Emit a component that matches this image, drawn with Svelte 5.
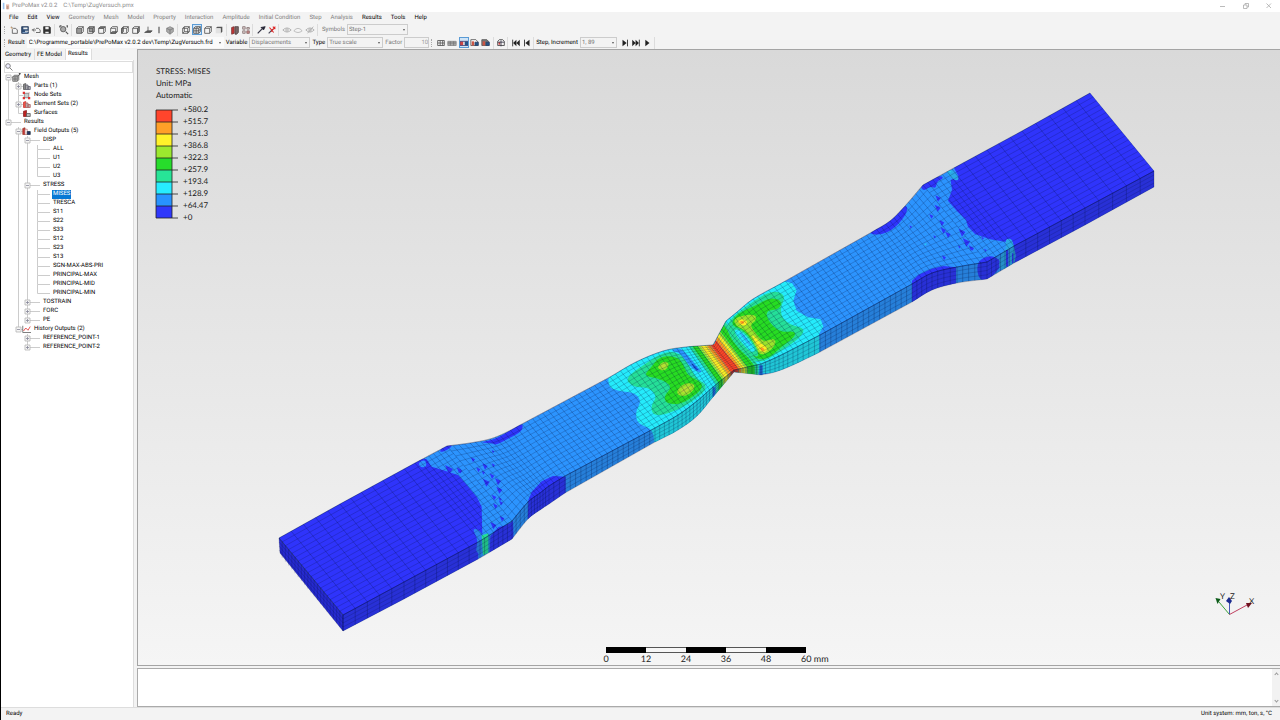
<script>
  const menus = [
    ['File', 1], ['Edit', 1], ['View', 1], ['Geometry', 0], ['Mesh', 0], ['Model', 0], ['Property', 0],
    ['Interaction', 0], ['Amplitude', 0], ['Initial Condition', 0], ['Step', 0], ['Analysis', 0],
    ['Results', 1], ['Tools', 1], ['Help', 1]
  ];

  // Toolbar groups: total width in pixels and the icons spread over it.
  const mainTools = [
    { w: 47, icons: ['new', 'open', 'import', 'save'] },
    { w: 15, icons: ['zoomfit'] },
    { w: 104, icons: ['front', 'back', 'top', 'bottom', 'left', 'right', 'normal', 'vertical', 'iso'] },
    { w: 47, icons: ['wire', 'edges*', 'outline', 'shaded'] },
    { w: 24, icons: ['section', 'explode'] },
    { w: 24, icons: ['query', 'unquery'] },
    { w: 37, icons: ['eye', 'eye2', 'eyeoff'] }
  ];
  const resultTools = [
    { w: 59, icons: ['grid', 'undeformed', 'contour*', 'deform', 'deform2'] },
    { w: 12, icons: ['animate'] }
  ];

  const tree = [
    [0, 'Mesh', 'mesh', '-'],
    [1, 'Parts (1)', 'part', '+'],
    [1, 'Node Sets', 'nodes', ''],
    [1, 'Element Sets (2)', 'elements', '+'],
    [1, 'Surfaces', 'surface', ''],
    [0, 'Results', '', '-'],
    [1, 'Field Outputs (5)', 'field', '-'],
    [2, 'DISP', '', '-'],
    [3, 'ALL', '', ''], [3, 'U1', '', ''], [3, 'U2', '', ''], [3, 'U3', '', ''],
    [2, 'STRESS', '', '-'],
    [3, 'MISES', '', ''], [3, 'TRESCA', '', ''], [3, 'S11', '', ''], [3, 'S22', '', ''], [3, 'S33', '', ''],
    [3, 'S12', '', ''], [3, 'S23', '', ''], [3, 'S13', '', ''], [3, 'SGN-MAX-ABS-PRI', '', ''],
    [3, 'PRINCIPAL-MAX', '', ''], [3, 'PRINCIPAL-MID', '', ''], [3, 'PRINCIPAL-MIN', '', ''],
    [2, 'TOSTRAIN', '', '+'], [2, 'FORC', '', '+'], [2, 'PE', '', '+'],
    [1, 'History Outputs (2)', 'history', '-'],
    [2, 'REFERENCE_POINT-1', '', '+'], [2, 'REFERENCE_POINT-2', '', '+']
  ];
  const railX = [3.5, 13.5, 22.5, 32.5];
  const labelX = [18, 28, 37, 47];
  const continues = (i, l) => {
    for (let k = i + 1; k < tree.length; k++) {
      if (tree[k][0] === l) return true;
      if (tree[k][0] < l) return false;
    }
    return false;
  };
  const rows = tree.map(([level, label, icon, exp], i) => {
    let d = '';
    for (let l = 0; l <= level; l++) {
      const below = continues(i, l);
      if (l === level) {
        if (i > 0) d += `M${railX[l]} 0V4.5`;
        if (below) d += `M${railX[l]} 4.5V9`;
      } else if (below) d += `M${railX[l]} 0V9`;
    }
    d += `M${railX[level]} 4.5H${icon ? labelX[level] - 10 : labelX[level] - 2}`;
    return { level, label, icon, exp, d, w: labelX[level], x: railX[level] };
  });

  const legend = [
    ['+580.2', '#ff452c'], ['+515.7', '#ff9f28'], ['+451.3', '#fff22a'], ['+386.8', '#9ce82e'],
    ['+322.3', '#27dc2b'], ['+257.9', '#27e497'], ['+193.4', '#27ecff'], ['+128.9', '#2893ff'],
    ['+64.47', '#2f38fb'], ['+0', '']
  ];
  const C = { b0: '#2f34fb', b1: '#2c94fe', cy: '#25ebfb', te: '#25df98', gr: '#27dc22', li: '#9be32c', ye: '#fdef25', or: '#ff9a22', re: '#fd4526' };

  // Matching stations along the specimen: upper edge, lower edge, side thickness, cells to the next station.
  const st = [
    [279, 538, 343, 615, 16, 5], [340, 504, 404, 582, 17, 7], [415, 463, 480, 541, 17, 7],
    [447, 446, 512, 521, 18, 4], [470, 443, 528, 502, 17, 4], [490, 439, 540, 493, 17, 3], [505, 433, 549, 486, 18, 3],
    [522, 424, 565, 476, 17, 17], [610, 377, 655, 428, 14, 5], [636, 362, 678, 415, 15, 5], [663, 351, 697, 401, 15, 5],
    [686, 347, 713, 387, 10, 7], [713, 345, 734, 370, 2, 6], [726, 321, 761, 364, 11, 3], [737, 312, 775, 358, 14, 4],
    [753, 299, 793, 349, 16, 5], [780, 284, 820, 335, 17, 17], [872, 232, 912, 284, 18, 4], [890, 221, 932, 273, 17, 4],
    [905, 206, 957, 267, 16, 5], [923, 185, 987, 262, 17, 6], [952, 169, 1014, 246, 17, 6],
    [1022, 131, 1085, 208, 17, 5], [1090, 93, 1154, 171, 16, 0]
  ];
  const pts = (a) => a.map((p) => p.join(' ')).join('L');
  // Stretches of the outline that are curved; the rest is straight.
  const curved = [[3, 7], [8, 12], [13, 16], [17, 20]];
  const at = (i, f) => {
    const r = curved.find(([a, b]) => i >= a && i < b);
    return [0, 1, 2, 3, 4].map((j) => {
      const p1 = st[i][j], p2 = st[i + 1][j];
      if (!r) return +(p1 + (p2 - p1) * f).toFixed(2);
      const p0 = i > r[0] ? st[i - 1][j] : 2 * p1 - p2;
      const p3 = i + 1 < r[1] ? st[i + 2][j] : 2 * p2 - p1;
      const v = 0.5 * (2 * p1 + (p2 - p0) * f + (2 * p0 - 5 * p1 + 4 * p2 - p3) * f * f + (3 * p1 - p0 - 3 * p2 + p3) * f * f * f);
      return +v.toFixed(2);
    });
  };
  const range = (a, b) => {
    const out = [];
    for (let i = a; i < b; i++) for (let k = 0; k < 4; k++) out.push(at(i, k / 4));
    out.push(st[b]);
    return out;
  };
  const fine = range(0, 23);
  const up = fine.map((s) => [s[0], s[1]]);
  const lo = fine.map((s) => [s[2], s[3]]);
  const bt = fine.map((s) => [s[2], s[3] + s[4]]);
  const topFace = `M${pts(up)}L${pts([...lo].reverse())}Z`;
  const sideFace = `M${pts(lo)}L${pts([...bt].reverse())}Z`;
  const endFace = 'M279 538L343 615V631L280 553Z';
  let mesh = '';
  for (const [a, b, n] of [[0, 3, 20], [3, 20, 15], [20, 23, 20]]) {
    const part = range(a, b);
    for (let k = 0; k <= n; k++) {
      const t = k / n;
      mesh += 'M' + pts(part.map((s) => [(s[0] + (s[2] - s[0]) * t).toFixed(1), (s[1] + (s[3] - s[1]) * t).toFixed(1)]));
    }
  }
  let cross = '';
  st.slice(0, -1).forEach((s, i) => {
    for (let k = 0; k < s[5]; k++) {
      const v = at(i, k / s[5]);
      cross += `M${v[0]} ${v[1]}L${v[2]} ${v[3]}v${v[4]}`;
    }
  });
  let sideMesh = '';
  for (const t of [0.25, 0.5, 0.75]) {
    sideMesh += 'M' + pts(fine.map((s) => [s[2], (s[3] + s[4] * t).toFixed(1)]));
    sideMesh += `M279 ${538 + 16 * t}L343 ${615 + 16 * t}`;
  }
  for (let k = 1; k < 20; k++) sideMesh += `M${279 + 3.2 * k} ${538 + 3.85 * k}v16`;

  // Closed smooth curve through the midpoints of a control polygon given as "x,y x,y ...".
  const blob = (text) => {
    const p = text.split(' ').map((q) => q.split(',').map(Number));
    const mid = (a, b) => [(a[0] + b[0]) / 2, (a[1] + b[1]) / 2];
    let d = 'M' + mid(p[p.length - 1], p[0]).join(' ');
    p.forEach((q, i) => (d += `Q${q.join(' ')} ${mid(q, p[(i + 1) % p.length]).join(' ')}`));
    return d + 'Z';
  };
  const poly = (text) => 'M' + text.replaceAll(' ', 'L').replaceAll(',', ' ') + 'Z';

  // Bands swept between two transverse lines of the neck.
  const sweep = (a, b, stops) => {
    const line = (f) => [0, 1, 2, 3].map((j) => a[j] + (b[j] - a[j]) * f);
    return stops.slice(0, -1).map(([f, c], i) => {
      const p = line(f), q = line(stops[i + 1][0]);
      return { c, d: `M${p[0]} ${p[1]}L${p[2]} ${p[3]}V${p[3] + 40}H${q[2]}V${q[3]}L${q[0]} ${q[1]}Z` };
    });
  };
  const neck = [
    ...sweep([306, 230, 396, 356], [403, 222, 463, 300], [[0, C.cy], [0.2, C.te], [0.3, C.gr], [0.48, C.li], [0.55, C.ye], [0.74, C.or], [0.86, C.re], [1, '']]),
    ...sweep([403, 222, 463, 300], [436, 148, 540, 285], [[0, C.re], [0.16, C.or], [0.28, C.ye], [0.42, C.li], [0.52, C.gr], [0.8, C.te], [0.93, '']])
  ].filter((b) => b.c);
  const neckBlobs = [
    [C.cy, '86,305 84,352 118,364 166,368 184,395 166,425 172,462 222,478 222,540 480,400 480,300 400,200 300,215 180,260'],
    [C.te, '134,325 160,352 205,352 232,378 212,408 220,438 270,430 335,398 388,350 348,325 318,270 290,246 250,246 190,285'],
    [C.gr, '190,318 212,294 238,260 286,258 312,282 320,315 362,335 368,352 348,374 300,404 258,400 252,378 278,350 240,325'],
    [C.li, '228,294 252,272 270,282 254,304'],
    [C.li, '286,370 306,342 342,338 344,360 312,382'],
    ['#b9dd35', '240,290 252,280 260,286 250,296'],
    ['#b9dd35', '300,364 314,350 334,346 332,358 312,370']
  ];
  const neckStrip = [
    [C.b1, '268,240 300,232 326,258 350,288 368,308 350,306 324,284 304,250'],
    ['#174fd4', '332,278 344,286 358,302 346,300']
  ];
  const rightBlobs = [
    [C.te, '446,150 500,108 560,68 596,64 616,80 602,110 604,140 630,165 672,174 668,194 640,218 580,258 545,278 500,265 440,190'],
    [C.gr, '452,158 476,128 530,106 570,82 606,92 598,118 556,122 566,156 602,188 644,182 646,200 600,234 566,266 528,268 505,240 520,225 500,190 470,175'],
    [C.li, '460,150 480,138 526,132 530,152 508,164 532,198 552,216 584,204 588,222 566,248 540,256 526,230 512,200 490,176 470,170'],
    [C.ye, '470,152 490,146 504,156 496,168 480,164'],
    [C.ye, '512,190 530,206 548,226 562,230 560,246 542,246 530,226'],
    [C.or, '478,154 490,152 494,160 484,162'], [C.or, '540,232 552,234 554,242 544,242'],
    [C.te, '448,172 474,170 505,196 532,236 536,262 516,256 484,228'],
    [C.cy, '458,178 482,180 512,212 528,242 514,248 484,218'],
    ['#2fb6f5', '474,184 486,190 508,216 514,230 500,220']
  ];
  const rightGrip = [
    [C.b0, poly('341,262 356,290 332,300 336,330 324,362 350,392 378,420 384,440 405,462 450,478 500,486 522,494 524,560 970,340 970,260 750,20')],
    [C.b0, blob('240,315 262,298 305,286 310,296 290,304 288,326 270,318 250,334')],
    [C.b0, blob('80,460 150,420 198,370 204,396 165,446 120,466')],
    [C.b0, poly('216,680 216,602 236,584 275,566 310,558 348,562 348,620')],
    [C.b0, blob('412,542 450,526 476,536 486,555 464,580 440,612 412,590')],
    ['#2ba8e8', blob('318,278 338,268 346,282 358,294 350,304 330,290')],
    ['#2ba8e8', blob('480,528 500,505 495,478 515,475 522,500 530,540 506,565 476,570')],
    [C.b0, 'M498 510v50h7v-50zM516 520v30h4v-30z'],
    ['#25d0ee', 'M318 276l14-5 2 6zM252 492l8-2-3 6z']
  ];
  const leftGrip = [
    [C.b0, poly('20,380 20,460 235,690 640,460 640,395 652,374 650,290 636,262 600,218 580,196 540,182 500,170 485,148 460,145 235,270')],
    [C.b0, blob('520,128 540,100 566,104 545,122')],
    [C.b0, blob('640,98 700,86 772,34 774,62 730,86 692,106 680,98')],
    [C.b0, poly('788,340 790,270 800,246 830,214 864,198 902,200 902,260')],
    [C.b0, poly('674,430 676,378 700,352 744,330 746,400')],
    [C.b1, blob('458,160 480,148 486,168 470,174')],
    ['#2b86f0', blob('622,358 636,356 652,372 664,398 662,430 630,430 640,390')],
    [C.b1, blob('690,345 740,318 750,330 712,352')],
    [C.te, 'M650 376l20-6v58l-16 8z'],
    ['#20b98f', 'M656 390v44M664 386v46']
  ];
  const tri = (list) => list.split(' ').map((q) => { const [x, y, s = 8] = q.split(',').map(Number); return `M${x} ${y}l${s} ${s / 2}l${-s / 2} ${s * 0.7}z`; }).join('');
  const rightSpecks = tri('286,346,16 284,374,18 268,402,12 298,420,15 302,442,16 316,455,16 356,446,20 368,474,22 386,496,14 208,436,8 306,526,12 354,496,8 424,470,8 392,500,10 432,506,8 280,466,8');
  const leftSpecks = tri('540,165,24 575,172,14 618,142,12 634,172,12 652,160,16 674,190,14 654,206,20 690,204,18 694,230,18 680,254,14 684,280,14 702,272,12 676,336,18 704,318,14 580,176,12 680,120,8 700,262,10 650,182,10 680,160,10');

  let results = $state('MISES');
</script>

{#snippet glyph(name)}
  <svg class="glyph" viewBox="0 0 12 12" aria-hidden="true" fill="none" stroke="#555" stroke-width="1">
    {#if name === 'new'}<path d="M3 2l1 2M5 4h3l2 2v4H4V5" /><path d="M2 3l2 1" stroke="#d89040" />
    {:else if name === 'open'}<path d="M2 2h8v8H2z" fill="#2d4d76" stroke="#263b59" /><path d="M4 3h5v2H4zM6 7h4v1H6z" fill="#eee" stroke="none" /><path d="M3 9h6" stroke="#8ac" />
    {:else if name === 'import'}<path d="M1 6h5M4 4L2 6l2 2M6 4h3l2 2v3H6" />
    {:else if name === 'save'}<path d="M2 2h7l1 1v7H2z" fill="#333" stroke="#333" /><path d="M4 2h4v3H4zM4 8h4v2H4z" fill="#eee" stroke="none" />
    {:else if name === 'zoomfit'}<circle cx="5" cy="5" r="3.200" fill="#aaa" /><path d="M8 8l3 3M1 1h2M1 1v2M9 1h1v2" stroke-width="1.400" />
    {:else if name === 'front'}<path d="M2 4h6v6H2z" fill="#999" /><path d="M2 4l2-2h6v6L8 10M8 4l2-2" />
    {:else if name === 'back'}<path d="M4 2h6v6H4z" fill="#999" /><path d="M2 4h6v6H2zM2 4l2-2M8 4l2-2M8 10l2-2" />
    {:else if name === 'top'}<path d="M2 4l2-2h6L8 4z" fill="#777" /><path d="M2 4h6v6H2zM8 10l2-2V2" />
    {:else if name === 'bottom'}<path d="M2 10l2-2h6l-2 2z" fill="#777" /><path d="M2 4h6v6H2zM2 4l2-2h6v6" />
    {:else if name === 'left'}<path d="M2 4l2-2v6l-2 2z" fill="#888" /><path d="M2 4h6v6H2zM4 2h6v6L8 10M8 4l2-2" />
    {:else if name === 'right'}<path d="M8 4l2-2v6l-2 2z" fill="#888" /><path d="M2 4h6v6H2zM2 4l2-2h6" />
    {:else if name === 'normal'}<path d="M2 9l3-2h6L9 9z" fill="#555" /><path d="M6 7V2" />
    {:else if name === 'vertical'}<path d="M6 2v8" stroke-width="1.400" />
    {:else if name === 'iso'}<path d="M2 4l4-2 4 2v4l-4 3-4-3z" fill="#aaa" stroke="#888" /><path d="M2 4l4 2v5M6 6l4-2" stroke="#777" />
    {:else if name === 'wire'}<path d="M2 4h6v6H2zM4 2h6v6H4zM2 4l2-2M8 4l2-2M2 10l2-2M8 10l2-2" />
    {:else if name === 'edges'}<path d="M2 4l2-2h6v6l-2 2H2z" fill="#ddd" /><path d="M2 4h6l2-2M8 4v6M2 7h6l2-2M5 4v6M5 4l2-2" />
    {:else if name === 'outline'}<path d="M2 4h6v6H2zM2 4l2-2h6v6l-2 2M8 4l2-2" />
    {:else if name === 'shaded'}<path d="M2 4l2-2h6v6L8 10V4z" fill="#555" stroke="none" /><path d="M2 4h6v6H2z" fill="#e2e2e2" stroke="none" />
    {:else if name === 'section'}<path d="M2 3l3-1v8l-3 1z" fill="#c33" stroke="#733" /><path d="M6 2h4v7l-2 2H6z" fill="#766" stroke="#544" />
    {:else if name === 'explode'}<path d="M2 2h3v3H2zM7 3h3v2H7zM2 7h3v3H2z" fill="#dcc" stroke="#877" /><path d="M7 7h3v3H7z" fill="#c88" stroke="#866" />
    {:else if name === 'query'}<path d="M2 10l5-5" stroke="#334" stroke-width="1.500" /><path d="M6 3l3 3 2-4z" fill="#223" stroke="#223" />
    {:else if name === 'unquery'}<path d="M2 10l5-5" stroke="#445" stroke-width="1.400" /><path d="M7 2l3 3M10 2L5 8M3 3l5 6" stroke="#d22" stroke-width="1.300" />
    {:else if name === 'eye'}<path d="M1 6q5-5 10 0q-5 5-10 0z" stroke="#aaa" /><circle cx="6" cy="6" r="1.500" stroke="#aaa" />
    {:else if name === 'eye2'}<path d="M1 7q5-6 10 0q-5 4-10 0z" stroke="#b5b5b5" />
    {:else if name === 'eyeoff'}<path d="M1 6q5-5 10 0q-5 5-10 0zM3 10l7-8" stroke="#aaa" /><circle cx="6" cy="6" r="1.500" stroke="#aaa" />
    {:else if name === 'grid'}<path d="M2 3h8v6H2zM2 6h8M5 3v6M8 3v6" stroke="#555" />
    {:else if name === 'undeformed'}<path d="M1 4h10v5H1z" fill="#aaa" stroke="#888" /><path d="M4 4v5M8 4v5M1 6h10" stroke="#777" />
    {:else if name === 'contour'}<path d="M1 4h4v5H1z" fill="#c44" stroke="none" /><path d="M5 4h2v5H5z" fill="#dcc" stroke="none" /><path d="M7 4h4v5H7z" fill="#258" stroke="none" /><path d="M1 4h10v5H1z" stroke="#447" />
    {:else if name === 'deform' || name === 'deform2'}<path d="M1 2h6l2 2v5H1z" fill={name === 'deform' ? '#fff' : '#777'} /><path d="M2 4h3v5H2z" fill="#c54" stroke="none" /><path d="M6 5h4v4H6z" fill="#258" stroke="#346" />
    {:else if name === 'animate'}<path d="M2 4l2-2h4l2 2v5H2z" stroke="#444" /><path d="M3 5h2v3H3z" fill="#c44" stroke="none" /><path d="M6 3v7M2 5h8" stroke="#334" />
    {:else if name === 'first'}<path d="M2 2v8" stroke="#222" /><path d="M6.500 2v8L2.500 6zM10.500 2v8L6.500 6z" fill="#222" stroke="none" />
    {:else if name === 'prev'}<path d="M3 2v8" stroke="#222" /><path d="M9 2v8L4 6z" fill="#222" stroke="none" />
    {:else if name === 'next'}<path d="M9 2v8" stroke="#222" /><path d="M3 2v8l5-4z" fill="#222" stroke="none" />
    {:else if name === 'last'}<path d="M10 2v8" stroke="#222" /><path d="M5.500 2v8l4-4zM1.500 2v8l4-4z" fill="#222" stroke="none" />
    {:else if name === 'play'}<path d="M4 2v8l5-4z" fill="#222" stroke="none" />
    {:else if name === 'mesh'}<path d="M1 5h6v6H1zM1 8h6M4 5v6M1 5l2-2h6v6l-2 2M7 5l2-2" fill="#ccc" stroke="#555" /><path d="M9 1h3M10 0v3" stroke="#333" />
    {:else if name === 'part' || name === 'elements'}<path d="M2 3l3-1v8H2z" fill={name === 'part' ? '#888' : '#e54'} stroke={name === 'part' ? '#555' : '#c33'} /><path d="M5 4h3v6H5zM8 6h3v4H8z" fill="#bbb" stroke={name === 'part' ? '#556' : '#a55'} />
    {:else if name === 'nodes'}<path d="M3 3h6v6H3z" fill="#ccc" stroke="#777" /><path d="M1 1h3v3H1zM8 8h3v3H8zM1 8h3v3H1zM9 2h1v1H9z" fill="#d33" stroke="none" />
    {:else if name === 'surface'}<path d="M2 3l4-1v8H2z" fill="#b22" stroke="#822" /><path d="M6 6h5v4H6z" fill="#bbb" stroke="#555" />
    {:else if name === 'field'}<path d="M1 2l3-1v9H1z" fill="#c33" stroke="#943" /><path d="M4 3h3v7H4z" fill="#fff" stroke="#b77" /><path d="M7 6h4v4H7z" fill="#236" stroke="#234" />
    {:else if name === 'history'}<path d="M1 1v9h11" stroke="#555" /><path d="M2 8l3-4 3 3 3-5" stroke="#d22" />
    {/if}
  </svg>
{/snippet}

{#snippet tools(groups)}
  {#each groups as g}
    <div class="group" style:width="{g.w}px">
      {#each g.icons as icon}
        <button type="button" class:on={icon.endsWith('*')} aria-label={icon.replace('*', '')}>{@render glyph(icon.replace('*', ''))}</button>
      {/each}
    </div>
  {/each}
{/snippet}

<div class="app">
  <header class="title">
    <svg class="logo" viewBox="0 0 10 10" aria-hidden="true"><path d="M1 1h2v8H1z" fill="#9cc4ee" /><path d="M5 3h4v6H5z" fill="#e8b8a8" /><path d="M6 5h2v4H6z" fill="#b98" /></svg>
    <span>PrePoMax v2.0.2 &nbsp;&nbsp; C:\Temp\ZugVersuch.pmx</span>
    <div class="window">
      <button type="button" aria-label="Minimize"><svg viewBox="0 0 6 6"><path d="M0 3.500h5" /></svg></button>
      <button type="button" aria-label="Restore"><svg viewBox="0 0 6 6"><path d="M.5 2h3.500v3.500h-3.500zM2 2V.5h3.500V4H4" /></svg></button>
      <button type="button" aria-label="Close"><svg viewBox="0 0 6 6"><path d="M.5 .5l4.500 4.500M5 .5l-4.500 4.500" /></svg></button>
    </div>
  </header>

  <nav class="menu">
    {#each menus as [name, enabled]}
      <button type="button" disabled={!enabled}>{name}</button>
    {/each}
  </nav>

  <div class="bar">
    <i class="grip"></i>
    {@render tools(mainTools)}
    <label class="dim symbols" for="symbols">Symbols</label>
    <span class="drop w60 dim"><select id="symbols"><option>Step-1</option></select></span>
  </div>

  <div class="bar">
    <i class="grip"></i>
    <label for="result">Result</label>
    <span class="drop wide"><select id="result"><option>C:\Programme_portable\PrePoMax v2.0.2 dev\Temp\ZugVersuch.frd</option></select></span>
    <label for="variable">Variable</label>
    <span class="drop w60 dim"><select id="variable"><option>Displacements</option></select></span>
    <label for="type">Type</label>
    <span class="drop w56 dim"><select id="type"><option>True scale</option></select></span>
    <label class="dim" for="factor">Factor</label>
    <input id="factor" class="factor" value="10" />
    <i class="grip"></i>
    {@render tools(resultTools)}
    {@render tools([{ w: 24, icons: ['first', 'prev'] }])}
    <label for="inc">Step, Increment</label>
    <span class="drop w36 dim"><select id="inc"><option>1, 89</option></select></span>
    {@render tools([{ w: 36, icons: ['next', 'last', 'play'] }])}
  </div>

  <div class="work">
    <aside>
      <div class="tabs" role="tablist">
        <button type="button" role="tab">Geometry</button>
        <button type="button" role="tab">FE Model</button>
        <button type="button" role="tab" class="active" aria-selected="true">Results</button>
      </div>
      <div class="panel">
        <div class="search">
          <svg viewBox="0 0 8 8" aria-hidden="true"><circle cx="3" cy="3" r="2.300" /><path d="M4.800 4.800L7.500 7.500" /></svg>
          <input type="text" aria-label="Search" />
        </div>
        <ul class="tree" role="tree">
          {#each rows as r}
            <li role="treeitem" aria-selected={r.label === results}>
              <div class="rail" style:width="{r.w}px">
                <svg class="lines" viewBox="0 0 {r.w} 9" aria-hidden="true">
                  <path d={r.d} stroke="#ccc" fill="none" />
                  {#if r.exp}
                    <path d="M{r.x - 2.5} 2h5v5h-5z" fill="#f6f6f6" stroke="#b4b4b4" stroke-width=".8" />
                    <path d="M{r.x - 1.5} 4.500h3{r.exp === '+' ? `M${r.x} 3v3` : ''}" stroke="#889" stroke-width=".8" />
                  {/if}
                </svg>
                {#if r.icon}{@render glyph(r.icon)}{/if}
              </div>
              <button type="button" class:sel={r.label === results} onclick={() => (results = r.label)}>{r.label}</button>
            </li>
          {/each}
        </ul>
      </div>
    </aside>

    <main>
      <section class="view">
        <svg viewBox="138 50 1142 615" role="img" aria-label="Stress contour of the tensile specimen">
          <defs>
            <clipPath id="body"><path d={topFace} /><path d={sideFace} /></clipPath>
          </defs>
          <path d={endFace} fill={C.b0} />
          <g clip-path="url(#body)">
            <path d={topFace + sideFace} fill={C.b1} />
            <g transform="translate(840 80) scale(.33333)">
              {#each rightGrip as [fill, d]}<path {d} {fill} />{/each}
              <path d={rightSpecks} fill={C.b0} />
            </g>
            <g transform="translate(265 410) scale(.33333)">
              {#each leftGrip as [fill, d]}<path {d} {fill} />{/each}
              <path d={leftSpecks} fill={C.b0} />
            </g>
            <g transform="translate(580 270) scale(.33333)">
              <path d={blob(neckBlobs[0][1])} fill={C.cy} />
              <path d="M225 465h60v60h-60z" fill={C.cy} />
              <path d="M403 222L436 148L520 80L600 30L636 40L650 60L640 92L650 122L684 142L722 148L730 170L718 190V260L640 310H463V300Z" fill={C.cy} />
              {#each neckBlobs.slice(1) as [fill, d]}<path d={blob(d)} {fill} />{/each}
              {#each neck as b}<path d={b.d} fill={b.c} />{/each}
              {#each neckStrip as [fill, d]}<path d={blob(d)} {fill} />{/each}
              {#each rightBlobs as [fill, d]}<path d={blob(d)} {fill} />{/each}
              <path d={blob('396,222 412,220 440,255 478,296 463,306 430,275')} fill={C.re} />
              <path d="M398 352h8v50h-8zM538 286h10v40h-10z" fill="#2470ee" />
            </g>
          </g>
          <path d={sideFace} fill="#0c2030" fill-opacity=".18" />
          <path d={endFace} fill="#001" fill-opacity=".18" />
          <g fill="none" stroke="#04103c" stroke-width=".55">
            <path d={mesh} stroke-opacity=".38" />
            <path d={cross} stroke-opacity=".46" />
            <path d={sideMesh} stroke-opacity=".36" />
            <path d={topFace + sideFace + endFace} stroke-opacity=".4" />
          </g>

          <g class="plot">
            <g class="legend">
              <text x="156" y="74">STRESS: MISES</text>
              <text x="156" y="86">Unit: MPa</text>
              <text x="156" y="98">Automatic</text>
              {#each legend as [value, fill], i}
                {#if fill}<rect x="156" y={110 + i * 12} width="16" height="12" {fill} />{/if}
                <path d="M156 {110 + i * 12}h22" stroke="#222" stroke-width=".8" />
                <text x="183" y={112 + i * 12}>{value}</text>
              {/each}
              <path d="M156 110v108M172 110v108" stroke="#222" stroke-width=".8" />
            </g>

            <path d="M606.500 647.500h199v5h-199z" fill="#f6f6f6" stroke="#555" />
            <path d="M606 647h40v6h-40zM686 647h40v6h-40zM766 647h40v6h-40z" />
            {#each [0, 12, 24, 36, 48] as n, i}<text x={606 + i * 40} y="662" text-anchor="middle">{n}</text>{/each}
            <text x="801" y="662">60 mm</text>

            <path d="M1229.500 614.500V602" stroke="#4858b8" /><path d="M1229.500 614.500L1219 602" stroke="#3aa03a" /><path d="M1229.500 614.500L1247 605" stroke="#c04060" />
            <path d="M1226 601l3-4 3 4-2 3z" fill="#1c2c90" /><path d="M1215.500 598l5 1-3 5z" fill="#0c5a18" /><path d="M1246 603l6 0-4 5z" fill="#701020" />
            <text class="axis" x="1220" y="599">Y</text><text class="axis" x="1230" y="599">Z</text><text class="axis" x="1249" y="604">X</text>
          </g>
        </svg>
      </section>
      <div class="log">
        <textarea aria-label="Output" readonly></textarea>
        <div class="scroll"><i></i><i class="down"></i></div>
      </div>
    </main>
  </div>

  <footer><span>Ready</span><span>Unit system: mm, ton, s, °C</span></footer>
</div>

<style>
  :global(body) { margin: 0; background: #f2f2f2; }
  .app {
    display: grid;
    grid-template-rows: 12px 11px 13px 13px minmax(0, 1fr) 13px;
    height: 100vh;
    box-sizing: border-box;
    border-left: 1px solid #000;
    font: 6px/8px Roboto, "Open Sans", sans-serif;
    text-rendering: geometricPrecision;
    color: #000;
    background: #f3f3f3;
    overflow: hidden;
  }
  button, input, select, textarea { font: inherit; color: inherit; margin: 0; padding: 0; border: 0; background: none; border-radius: 0; outline: 0; white-space: nowrap; text-rendering: inherit; }
  .title { display: flex; align-items: center; background: #fff; color: #8c8c8c; padding-left: 1px; gap: 2px; }
  .logo { width: 8px; height: 8px; }
  .window { display: flex; margin-left: auto; gap: 17px; padding-right: 8px; }
  .window button { width: 6px; height: 6px; display: flex; }
  .window svg { width: 6px; height: 6px; fill: none; stroke: #aaa; stroke-width: .8; }
  .menu { display: flex; align-items: center; gap: 9px; padding-left: 8px; }
  .menu button:disabled { color: #808080; }
  .bar { display: flex; align-items: center; padding-left: 3px; gap: 2px; white-space: nowrap; }
  .grip { width: 1px; height: 8px; border-left: 1px dotted #aaa; }
  .bar .dim { color: #777; }
  .bar .symbols { padding-left: 2px; }
  .group { display: flex; justify-content: space-around; flex: none; height: 12px; padding-right: 1px; border-right: 1px solid #dcdcdc; box-sizing: border-box; align-items: center; }
  .group button { width: 10px; height: 11px; display: flex; align-items: center; justify-content: center; flex: none; }
  .group button.on { outline: 1px solid #5a9bd5; outline-offset: -1px; background: #cfe4f7; }
  .glyph { width: 10px; height: 10px; flex: none; }
  .drop { position: relative; display: flex; box-sizing: border-box; height: 11px; border: 1px solid #ccc; flex: none; }
  .drop select { appearance: none; width: 100%; padding-left: 1px; line-height: 9px; }
  .drop::after { content: ""; position: absolute; right: 2px; top: 4px; border: 1px solid transparent; border-top: 2px solid #555; pointer-events: none; }
  .wide { width: 197px; background: #fbfbfb; border-color: #fbfbfb; }
  .w60 { width: 61px; }
  .w56 { width: 56px; }
  .w36 { width: 37px; }
  .factor { width: 23px; height: 9px; border: 1px solid #ccc; color: #999; text-align: right; }
  .work { display: grid; grid-template-columns: 133px minmax(0, 1fr); column-gap: 3px; min-height: 0; }
  aside { display: flex; flex-direction: column; min-height: 0; background: #f3f3f3; }
  .tabs { display: flex; height: 11px; padding-left: 2px; align-items: stretch; }
  .tabs button { padding: 1px 3px 0 2px; border-right: 1px solid #ddd; }
  .tabs .active { background: #fff; padding-bottom: 2px; padding-top: 0; }
  .panel { flex: 1; display: flex; flex-direction: column; background: #fff; padding-left: 3px; border-right: 1px solid #ddd; min-height: 0; }
  .search { display: flex; align-items: center; height: 10px; border: 1px solid #ddd; margin-top: 1px; }
  .search svg { width: 8px; height: 8px; fill: #eef; stroke: #777; stroke-width: .9; flex: none; }
  .search input { flex: 1; min-width: 0; height: 9px; }
  .tree { list-style: none; margin: 0; padding: 0 0 0 1px; }
  .tree li { display: flex; height: 9px; align-items: center; }
  .rail { display: flex; justify-content: flex-end; position: relative; height: 9px; flex: none; }
  .rail .lines { position: absolute; left: 0; top: 0; width: 100%; height: 9px; }
  .rail .glyph { width: 9px; height: 9px; margin-right: 2px; position: relative; }
  .tree button { height: 9px; line-height: 7px; padding: 0 1px 2px; }
  .tree .sel { background: #0878d4; color: #fff; }
  main { display: grid; grid-template-rows: minmax(0, 1fr) 41px; min-height: 0; }
  .view { background: linear-gradient(#d9d9d9, #f5f5f5); border: 1px solid #a4a4a4; border-right: 0; overflow: hidden; display: flex; }
  .view svg { width: 100%; height: 100%; display: block; }
  .plot text { font: 9px Lato, sans-serif; fill: #222; }
  .plot .legend text, .plot .axis { font-size: 8px; }
  .log { display: flex; margin-top: 2px; background: #fff; border: 1px solid #aaa; border-right: 0; }
  .log textarea { flex: 1; resize: none; }
  .scroll { width: 8px; background: #f2f2f2; display: flex; flex-direction: column; justify-content: space-between; align-items: center; padding: 4px 0; }
  .scroll i { width: 2px; height: 2px; border: solid #999; border-width: 1px 0 0 1px; transform: rotate(45deg); }
  .scroll i.down { transform: rotate(225deg); }
  footer { display: flex; justify-content: space-between; align-items: center; padding: 0 8px 0 5px; border-top: 1px solid #ddd; }
</style>
